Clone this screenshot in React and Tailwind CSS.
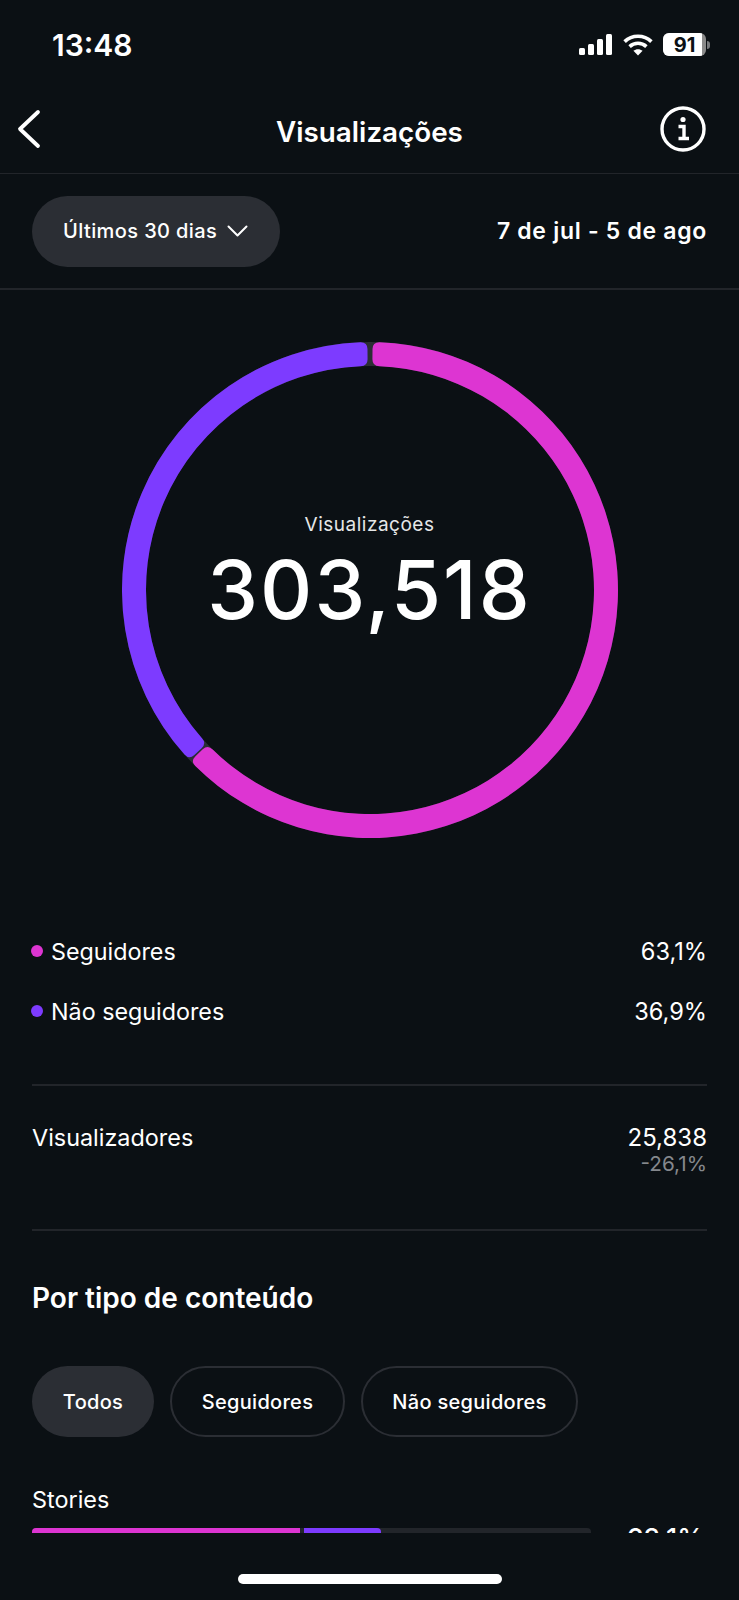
const PINK = "#dd35d2";
const PURPLE = "#7d3bff";

const polar = (r, deg) => {
  const a = ((deg - 90) * Math.PI) / 180;
  return `${(250 + r * Math.cos(a)).toFixed(2)} ${(250 + r * Math.sin(a)).toFixed(2)}`;
};

// ring segment with slightly rounded ends
const segment = (from, to, outer = 248, inner = 224, c = 7) => {
  const dO = ((c / outer) * 180) / Math.PI;
  const dI = ((c / inner) * 180) / Math.PI;
  const large = to - from > 180 ? 1 : 0;
  return [
    `M ${polar(outer, from + dO)}`,
    `A ${outer} ${outer} 0 ${large} 1 ${polar(outer, to - dO)}`,
    `Q ${polar(outer, to)} ${polar(outer - c, to)}`,
    `L ${polar(inner + c, to)}`,
    `Q ${polar(inner, to)} ${polar(inner, to - dI)}`,
    `A ${inner} ${inner} 0 ${large} 0 ${polar(inner, from + dI)}`,
    `Q ${polar(inner, from)} ${polar(inner + c, from)}`,
    `L ${polar(outer - c, from)}`,
    `Q ${polar(outer, from)} ${polar(outer, from + dO)}`,
    "Z",
  ].join(" ");
};

const StatusIcons = () => (
  <div className="flex items-center gap-[10px]">
    <svg width="34" height="21" viewBox="0 0 34 21" fill="white">
      <rect x="0" y="14" width="6" height="7" rx="1.5" />
      <rect x="9" y="10" width="6" height="11" rx="1.5" />
      <rect x="18" y="5" width="6" height="16" rx="1.5" />
      <rect x="27" y="0" width="6" height="21" rx="1.5" />
    </svg>
    <svg width="30" height="22" viewBox="0 0 30 22" fill="none" stroke="white" strokeWidth="3.6">
      <path d="M1.6 7.6 C9 0.4 21 0.4 28.4 7.6" />
      <path d="M6.6 12.6 C11.4 8.2 18.6 8.2 23.4 12.6" />
      <path d="M15 21.5 L10.4 16.8 C13 14.6 17 14.6 19.6 16.8 Z" fill="white" stroke="none" />
    </svg>
    <div className="flex items-center gap-[1px]">
      <div className="relative w-[43px] h-[23px] rounded-[6px] bg-[#8a8a8a] overflow-hidden">
        <div className="absolute inset-y-0 left-0 w-[39px] bg-white" />
        <span className="absolute inset-0 flex items-center justify-center text-[20px] font-bold text-[#0b1014] leading-none">
          91
        </span>
      </div>
      <div className="w-[3px] h-[8px] rounded-r-full bg-[#77797c]" />
    </div>
  </div>
);

const LegendRow = ({ color, label, value }) => (
  <div className="flex items-center justify-between h-[60px]">
    <div className="flex items-center gap-[8px] -ml-[1px]">
      <span className="w-[12px] h-[12px] rounded-full -mt-[3px]" style={{ backgroundColor: color }} />
      <span className="text-[23.3px]">{label}</span>
    </div>
    <span className="text-[23.6px]">{value}</span>
  </div>
);

export default function App() {
  return (
    <div className="w-[739px] h-[1600px] bg-[#0b1014] text-white flex flex-col overflow-hidden [font-family:Inter,sans-serif]">
      {/* Status bar */}
      <div className="h-[89px] shrink-0 pl-[52px] pr-[29px] pt-[27px] flex items-start justify-between">
        <span className="text-[30px] leading-[36px] font-semibold">13:48</span>
        <div className="pt-[6px]">
          <StatusIcons />
        </div>
      </div>

      {/* Header */}
      <div className="h-[85px] shrink-0 border-b border-[#22252a] pl-[16px] pr-[33px] flex items-center justify-between relative">
        <svg width="26" height="40" viewBox="0 0 26 40" fill="none" stroke="white" strokeWidth="3.8" strokeLinecap="round" strokeLinejoin="round" className="-mt-[5px]">
          <path d="M22 3 L4 20 L22 37" />
        </svg>
        <span className="absolute left-0 right-0 text-center text-[27.8px] font-semibold mt-[3px]">Visualizações</span>
        <svg width="46" height="46" viewBox="0 0 46 46" fill="none" stroke="white" className="-mt-[4px]">
          <circle cx="23" cy="23" r="21" strokeWidth="3.4" />
          <circle cx="23" cy="13.5" r="2.6" fill="white" stroke="none" />
          <path d="M18.5 20.5 H24 V32 M18.5 32.5 H29" strokeWidth="3.4" />
        </svg>
      </div>

      {/* Period filter */}
      <div className="h-[116px] shrink-0 border-b-2 border-[#22252a] px-[32px] flex items-center justify-between">
        <div className="h-[71px] w-[248px] rounded-full bg-[#2b2e34] flex items-center pl-[31px] gap-[10px] text-[20px] font-medium tracking-[0.4px]">
          <span>Últimos 30 dias</span>
          <svg width="21" height="12" viewBox="0 0 21 12" fill="none" stroke="white" strokeWidth="2" strokeLinecap="round" strokeLinejoin="round">
            <path d="M1.5 1.5 L10.5 10.5 L19.5 1.5" />
          </svg>
        </div>
        <span className="text-[23px] font-semibold tracking-[0.7px]">7 de jul - 5 de ago</span>
      </div>

      {/* Scrollable content */}
      <div className="flex-1 min-h-0 overflow-hidden px-[32px]">
        <div className="relative w-[496px] h-[496px] ml-[89.5px] mt-[52px]">
          <svg width="496" height="496" viewBox="2 2 496 496" className="block">
            <circle cx="250" cy="250" r="236" fill="none" stroke="#2b2e34" strokeWidth="24" />
            <path d={segment(0.6, 226.4)} fill={PINK} />
            <path d={segment(226.8, 359.4)} fill={PURPLE} />
          </svg>
          <div className="absolute inset-0 flex flex-col items-center">
            <span className="mt-[169px] text-[19px] leading-[28px] tracking-[0.5px] text-[#e6e7e8]">Visualizações</span>
            <span className="text-[81px] leading-[94px] font-medium tracking-[2px] mt-[4px]">303,518</span>
          </div>
        </div>

        <div className="mt-[84px] text-[24px]">
          <LegendRow color={PINK} label="Seguidores" value="63,1%" />
          <LegendRow color={PURPLE} label="Não seguidores" value="36,9%" />
        </div>

        <div className="mt-[42px] h-[147px] border-y-2 border-[#22252a] pt-[36px] flex justify-between">
          <span className="text-[23.4px] leading-[32px]">Visualizadores</span>
          <div className="flex flex-col items-end">
            <span className="text-[24px] leading-[32px]">25,838</span>
            <span className="text-[20.7px] leading-[20px] text-[#85888d]">-26,1%</span>
          </div>
        </div>

        <h2 className="mt-[49px] text-[28px] leading-[36px] font-semibold">Por tipo de conteúdo</h2>

        <div className="mt-[50px] flex gap-[16px] text-[20px] font-medium tracking-[0.3px]">
          <div className="h-[71px] w-[122px] rounded-full bg-[#2b2e34] flex items-center justify-center">Todos</div>
          <div className="h-[71px] w-[175px] rounded-full border-2 border-[#2b2e34] flex items-center justify-center">Seguidores</div>
          <div className="h-[71px] w-[217px] rounded-full border-2 border-[#2b2e34] flex items-center justify-center">Não seguidores</div>
        </div>

        <div className="mt-[45px] text-[23.4px] leading-[36px]">Stories</div>
        <div className="mt-[10px] flex items-start justify-between">
          <div className="w-[559px] h-[8px] rounded-full bg-[#22252a] flex gap-[4px] overflow-hidden">
            <div className="w-[268px] bg-[#dd35d2]" />
            <div className="w-[77px] bg-[#7d3bff] rounded-r-[6px]" />
          </div>
          <span className="text-[27px] leading-[28px] font-medium -mt-[3px] mr-[3px]">62,1%</span>
        </div>
      </div>

      {/* Home indicator */}
      <div className="h-[67px] shrink-0 flex justify-center pt-[41px]">
        <div className="w-[264px] h-[10px] rounded-full bg-white" />
      </div>
    </div>
  );
}
